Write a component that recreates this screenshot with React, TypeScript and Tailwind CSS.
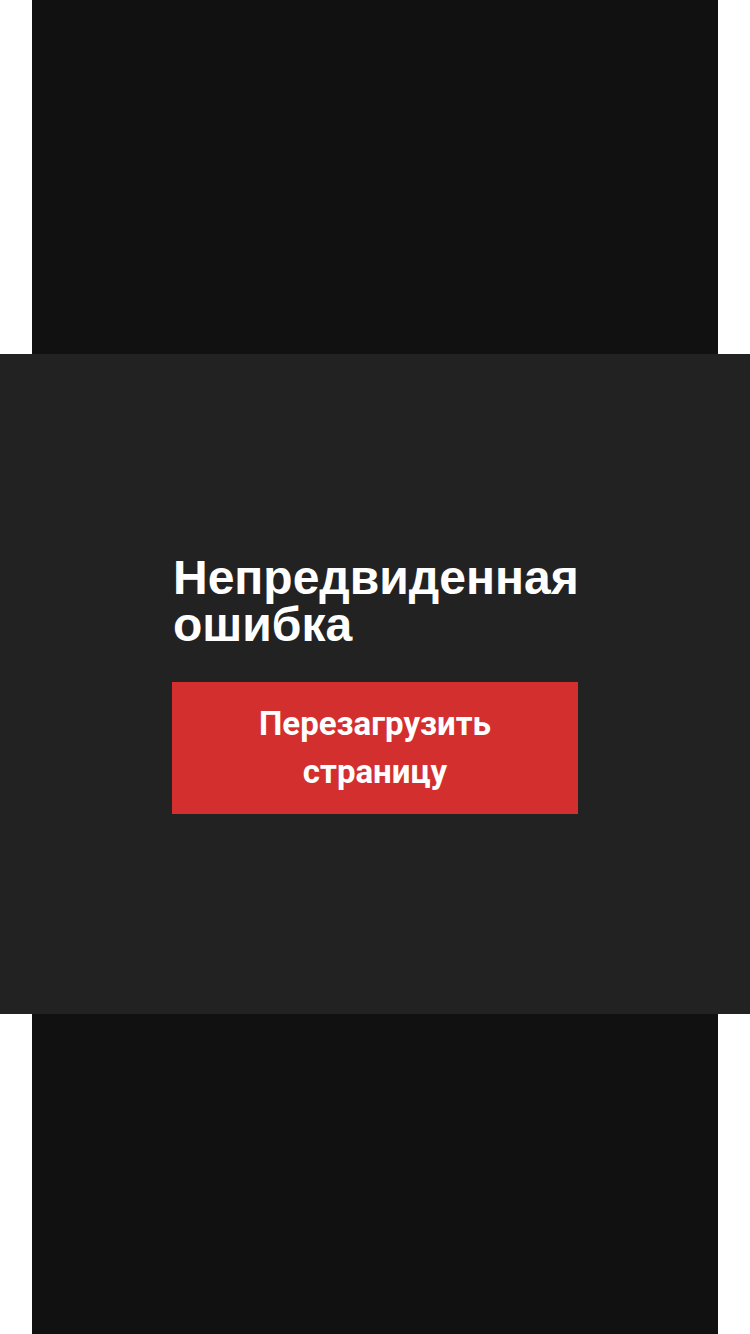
export default function App() {
  return (
    <div className="min-h-[1334px] w-full bg-white">
      <div className="mx-[32px] flex h-[1334px] flex-col bg-[#111111] pt-[354px]">
        <section className="-mx-[32px] flex h-[660px] items-center justify-center bg-[#222222]">
          <div className="flex w-[406px] flex-col gap-[34px]">
            <h1 className="pl-[1px] font-['Liberation_Sans',Arial,sans-serif] text-[48px] leading-[47px] font-bold text-white">
              Непредвиденная ошибка
            </h1>
            <button
              type="button"
              className="bg-[#d32f2f] px-[24px] py-[18px] text-center font-['Roboto',sans-serif] text-[33px] leading-[48px] font-bold text-white"
            >
              Перезагрузить страницу
            </button>
          </div>
        </section>
      </div>
    </div>
  );
}
